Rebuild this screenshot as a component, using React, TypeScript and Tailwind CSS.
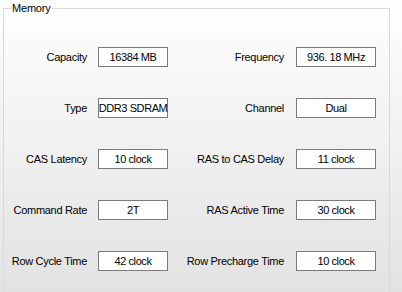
import React from "react";

const rows: [string, string, string, string][] = [
  ["Capacity", "16384 MB", "Frequency", "936. 18 MHz"],
  ["Type", "DDR3 SDRAM", "Channel", "Dual"],
  ["CAS Latency", "10 clock", "RAS to CAS Delay", "11 clock"],
  ["Command Rate", "2T", "RAS Active Time", "30 clock"],
  ["Row Cycle Time", "42 clock", "Row Precharge Time", "10 clock"],
];

export default function App() {
  return (
    <div
      className="w-[402px] h-[292px] overflow-hidden bg-gradient-to-b from-[#ffffff] to-[#e2e2e2] text-[11px] text-black"
      style={{ fontFamily: '"Liberation Sans", Arial, sans-serif' }}
    >
      <fieldset className="ml-[3px] w-[387px] h-[320px] border border-[#d9d9d9] p-0 pl-[7px] m-0">
        <legend className="px-[1px] leading-[17px] tracking-[-0.2px]">Memory</legend>
        <div className="pt-[30px] grid grid-cols-[77px_80px_117px_91px] gap-y-[31px]">
          {rows.map((r, i) => (
            <React.Fragment key={i}>
              <div className="h-[20px] flex items-center justify-end pr-[1px] whitespace-nowrap tracking-[-0.3px]">{r[0]}</div>
              <div className="ml-[10px] w-[70px] h-[20px] flex items-center justify-center bg-white border border-[#7a7a7a] whitespace-nowrap tracking-[-0.4px]">
                {r[1]}
              </div>
              <div className="h-[20px] flex items-center justify-end pr-[1px] whitespace-nowrap tracking-[-0.3px]">{r[2]}</div>
              <div className="ml-[11px] w-[80px] h-[20px] flex items-center justify-center bg-white border border-[#7a7a7a] whitespace-nowrap tracking-[-0.4px]">
                {r[3]}
              </div>
            </React.Fragment>
          ))}
        </div>
      </fieldset>
    </div>
  );
}
